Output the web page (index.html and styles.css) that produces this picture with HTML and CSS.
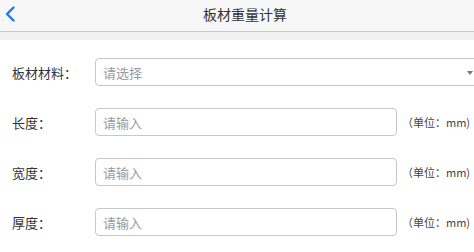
FILE: index.html
```html
<!DOCTYPE html>
<html lang="zh-CN">
<head>
<meta charset="utf-8">
<title>板材重量计算</title>
<link rel="stylesheet" href="styles.css">
</head>
<body>
<div class="page">
  <header class="navbar">
    <a class="back" href="#" aria-label="返回">
      <svg width="12" height="16" viewBox="0 0 12 16"><path d="M9.5 1.5 L3 8 L9.5 14.5" fill="none" stroke="#1a7cf2" stroke-width="2.4" stroke-linecap="round" stroke-linejoin="round"/></svg>
    </a>
    <h1 class="title">板材重量计算</h1>
  </header>
  <div class="band"></div>
  <form class="form">
    <div class="row">
      <label class="label">板材材料：</label>
      <div class="select">
        <span class="placeholder">请选择</span>
        <span class="arrow"></span>
      </div>
    </div>
    <div class="row">
      <label class="label">长度：</label>
      <div class="input"><span class="placeholder">请输入</span></div>
      <span class="unit">（单位：mm)</span>
    </div>
    <div class="row">
      <label class="label">宽度：</label>
      <div class="input"><span class="placeholder">请输入</span></div>
      <span class="unit">（单位：mm)</span>
    </div>
    <div class="row">
      <label class="label">厚度：</label>
      <div class="input"><span class="placeholder">请输入</span></div>
      <span class="unit">（单位：mm)</span>
    </div>
  </form>
</div>
</body>
</html>
```

FILE: styles.css
```css
html, body {
  margin: 0;
  padding: 0;
  background: #ffffff;
  overflow: hidden;
}
.page {
  width: 474px;
  height: 252px;
  overflow: hidden;
  font-family: "Noto Sans CJK SC", "Liberation Sans", sans-serif;
  color: #333333;
}
.navbar {
  height: 31px;
  border-bottom: 1px solid #c9c9cc;
  background: #f7f7f8;
  display: flex;
  align-items: center;
  justify-content: center;
  padding-left: 16px;
  position: relative;
}
.back {
  position: absolute;
  left: 4px;
  top: 6px;
  width: 12px;
  height: 16px;
  display: block;
}
.back svg { display: block; }
.title {
  margin: 0;
  font-size: 14px;
  font-weight: normal;
  color: #333333;
  line-height: 20px;
  margin-top: -4px;
}
.band {
  height: 8px;
  background: #efeff4;
}
.form {
  padding-top: 7px;
  display: flex;
  flex-direction: column;
}
.row {
  height: 50px;
  display: flex;
  align-items: center;
  padding-left: 12px;
}
.label {
  width: 83px;
  flex: none;
  font-size: 13px;
  color: #333333;
}
.select, .input {
  height: 28px;
  box-sizing: border-box;
  border: 1px solid #c7c7c7;
  border-radius: 4px;
  display: flex;
  align-items: center;
  padding-left: 7px;
  flex: none;
}
.select {
  width: 390px;
  position: relative;
}
.input {
  width: 302px;
}
.placeholder {
  font-size: 13px;
  color: #9a9a9a;
}
.arrow {
  position: absolute;
  left: 371px;
  top: 12px;
  width: 0;
  height: 0;
  border-left: 3px solid transparent;
  border-right: 3px solid transparent;
  border-top: 4px solid #777777;
}
.unit {
  margin-left: 5px;
  font-size: 11px;
  color: #444444;
  white-space: nowrap;
}
```
